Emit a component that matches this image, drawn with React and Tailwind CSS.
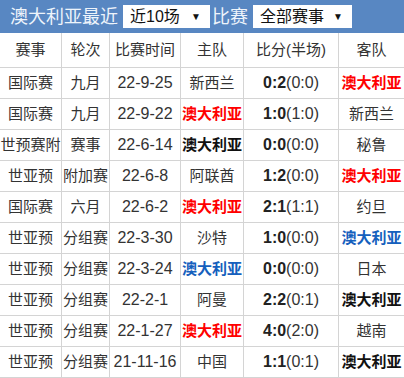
import React from 'react';

const cols = 'grid grid-cols-[62px_48px_71px_63px_95px_65px]';

const rows = [
  ['国际赛', '九月', '22-9-25', ['新西兰', ''], '0:2', '(0:0)', ['澳大利亚', 'red']],
  ['国际赛', '九月', '22-9-22', ['澳大利亚', 'red'], '1:0', '(1:0)', ['新西兰', '']],
  ['世预赛附', '赛事', '22-6-14', ['澳大利亚', 'black'], '0:0', '(0:0)', ['秘鲁', '']],
  ['世亚预', '附加赛', '22-6-8', ['阿联酋', ''], '1:2', '(0:0)', ['澳大利亚', 'red']],
  ['国际赛', '六月', '22-6-2', ['澳大利亚', 'red'], '2:1', '(1:1)', ['约旦', '']],
  ['世亚预', '分组赛', '22-3-30', ['沙特', ''], '1:0', '(0:0)', ['澳大利亚', 'blue']],
  ['世亚预', '分组赛', '22-3-24', ['澳大利亚', 'blue'], '0:0', '(0:0)', ['日本', '']],
  ['世亚预', '分组赛', '22-2-1', ['阿曼', ''], '2:2', '(0:1)', ['澳大利亚', 'black']],
  ['世亚预', '分组赛', '22-1-27', ['澳大利亚', 'red'], '4:0', '(2:0)', ['越南', '']],
  ['世亚预', '分组赛', '21-11-16', ['中国', ''], '1:1', '(0:1)', ['澳大利亚', 'black']],
];

function Team({ team }) {
  const [name, tone] = team;
  if (tone === 'red') return <span className="font-bold text-[#ff0000]">{name}</span>;
  if (tone === 'blue') return <span className="font-bold text-[#1560bd]">{name}</span>;
  if (tone === 'black') return <span className="font-bold text-[#111]">{name}</span>;
  return <span>{name}</span>;
}

function Cell({ children, last }) {
  return (
    <div className={`flex items-center justify-center whitespace-nowrap border-b border-[#d4d4d4] ${last ? '' : 'border-r'}`}>
      {children}
    </div>
  );
}

export default function App() {
  return (
    <div
      className="w-[404px] h-[378px] bg-white overflow-hidden text-[#333]"
      style={{ fontFamily: '"Liberation Sans", "Noto Sans CJK SC", sans-serif' }}
    >
      {/* top bar */}
      <div className="h-[33px] bg-[#5887c2] flex items-center pl-[10px] text-[18px] leading-none text-[#eef4fb]">
        <span>澳大利亚最近</span>
        <div className="ml-[5px] w-[87px] h-[23px] bg-white flex items-center justify-between pl-[7px] pr-[9px] text-[16px] text-[#111]">
          <span>近10场</span>
          <span className="text-[10px]">▼</span>
        </div>
        <span className="ml-[2px]">比赛</span>
        <div className="ml-[5px] w-[99px] h-[23px] bg-white flex items-center justify-between pl-[7px] pr-[9px] text-[16px] text-[#111]">
          <span>全部赛事</span>
          <span className="text-[10px]">▼</span>
        </div>
      </div>

      {/* table */}
      <div className={`${cols} h-[35px] text-[15px]`}>
        {['赛事', '轮次', '比赛时间', '主队', '比分(半场)', '客队'].map((h, i) => (
          <Cell key={h} last={i === 5}>{h}</Cell>
        ))}
      </div>
      {rows.map((r, idx) => (
        <div key={idx} className={`${cols} h-[31px] text-[15px]`}>
          <Cell>{r[0]}</Cell>
          <Cell>{r[1]}</Cell>
          <Cell><span className="text-[16px]">{r[2]}</span></Cell>
          <Cell><Team team={r[3]} /></Cell>
          <Cell>
            <span className="text-[16px]">
              <b className="text-[#222]">{r[4]}</b>{r[5]}
            </span>
          </Cell>
          <Cell last><Team team={r[6]} /></Cell>
        </div>
      ))}
    </div>
  );
}
